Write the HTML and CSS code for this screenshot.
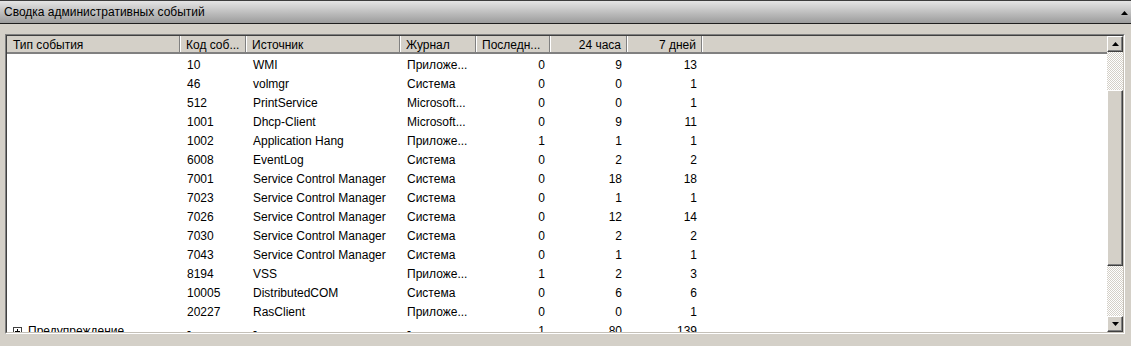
FILE: index.html
```html
<!DOCTYPE html>
<html>
<head>
  <title>Сводка административных событий</title>
  <link rel="stylesheet" href="styles.css">
</head>
<body>
  <div class="titlebar">
    <span>Сводка административных событий</span>
    <svg class="collapse" width="7" height="4" viewBox="0 0 7 4"><path d="M3.5 0L7 4H0z" fill="#000"/></svg>
  </div>

  <div class="panel">
    <div class="listview">
      <div class="listview-inner">
        <div class="table-area">
          <div class="row header">
            <div class="cell">Тип события</div>
            <div class="cell">Код соб...</div>
            <div class="cell">Источник</div>
            <div class="cell">Журнал</div>
            <div class="cell">Последн...</div>
            <div class="cell num">24 часа</div>
            <div class="cell num">7 дней</div>
            <div class="cell"></div>
          </div>

          <div class="row"><div class="cell"></div><div class="cell">10</div><div class="cell">WMI</div><div class="cell">Приложе...</div><div class="cell num">0</div><div class="cell num">9</div><div class="cell num">13</div></div>
          <div class="row"><div class="cell"></div><div class="cell">46</div><div class="cell">volmgr</div><div class="cell">Система</div><div class="cell num">0</div><div class="cell num">0</div><div class="cell num">1</div></div>
          <div class="row"><div class="cell"></div><div class="cell">512</div><div class="cell">PrintService</div><div class="cell">Microsoft...</div><div class="cell num">0</div><div class="cell num">0</div><div class="cell num">1</div></div>
          <div class="row"><div class="cell"></div><div class="cell">1001</div><div class="cell">Dhcp-Client</div><div class="cell">Microsoft...</div><div class="cell num">0</div><div class="cell num">9</div><div class="cell num">11</div></div>
          <div class="row"><div class="cell"></div><div class="cell">1002</div><div class="cell">Application Hang</div><div class="cell">Приложе...</div><div class="cell num">1</div><div class="cell num">1</div><div class="cell num">1</div></div>
          <div class="row"><div class="cell"></div><div class="cell">6008</div><div class="cell">EventLog</div><div class="cell">Система</div><div class="cell num">0</div><div class="cell num">2</div><div class="cell num">2</div></div>
          <div class="row"><div class="cell"></div><div class="cell">7001</div><div class="cell">Service Control Manager</div><div class="cell">Система</div><div class="cell num">0</div><div class="cell num">18</div><div class="cell num">18</div></div>
          <div class="row"><div class="cell"></div><div class="cell">7023</div><div class="cell">Service Control Manager</div><div class="cell">Система</div><div class="cell num">0</div><div class="cell num">1</div><div class="cell num">1</div></div>
          <div class="row"><div class="cell"></div><div class="cell">7026</div><div class="cell">Service Control Manager</div><div class="cell">Система</div><div class="cell num">0</div><div class="cell num">12</div><div class="cell num">14</div></div>
          <div class="row"><div class="cell"></div><div class="cell">7030</div><div class="cell">Service Control Manager</div><div class="cell">Система</div><div class="cell num">0</div><div class="cell num">2</div><div class="cell num">2</div></div>
          <div class="row"><div class="cell"></div><div class="cell">7043</div><div class="cell">Service Control Manager</div><div class="cell">Система</div><div class="cell num">0</div><div class="cell num">1</div><div class="cell num">1</div></div>
          <div class="row"><div class="cell"></div><div class="cell">8194</div><div class="cell">VSS</div><div class="cell">Приложе...</div><div class="cell num">1</div><div class="cell num">2</div><div class="cell num">3</div></div>
          <div class="row"><div class="cell"></div><div class="cell">10005</div><div class="cell">DistributedCOM</div><div class="cell">Система</div><div class="cell num">0</div><div class="cell num">6</div><div class="cell num">6</div></div>
          <div class="row"><div class="cell"></div><div class="cell">20227</div><div class="cell">RasClient</div><div class="cell">Приложе...</div><div class="cell num">0</div><div class="cell num">0</div><div class="cell num">1</div></div>
          <div class="row">
            <div class="cell group"><svg class="expander" width="9" height="9" viewBox="0 0 9 9"><rect x="0.5" y="0.5" width="8" height="8" fill="#fff" stroke="#404040"/><path d="M2 4.5h5M4.5 2v5" stroke="#000"/></svg>Предупреждение</div>
            <div class="cell">-</div><div class="cell">-</div><div class="cell">-</div><div class="cell num">1</div><div class="cell num">80</div><div class="cell num">139</div>
          </div>
        </div>

        <div class="vscroll">
          <div class="sb-button">
            <svg width="7" height="4" viewBox="0 0 7 4"><path d="M3.5 0L7 4H0z" fill="#000"/></svg>
          </div>
          <div class="sb-track">
            <div class="sb-thumb"></div>
          </div>
          <div class="sb-button">
            <svg width="7" height="4" viewBox="0 0 7 4"><path d="M0 0H7L3.5 4z" fill="#000"/></svg>
          </div>
        </div>
      </div>
    </div>
  </div>
</body>
</html>
```

FILE: styles.css
```css
body {
  margin: 0;
  width: 1131px;
  height: 346px;
  overflow: hidden;
  background-color: #d4d0c8;
  font-family: "Liberation Sans", Arial, sans-serif;
  font-size: 12px;
  color: #000;
}

.titlebar {
  height: 22px;
  border-top: 1px solid #3c3c3c;
  border-bottom: 1px solid #1e1e1e;
  background: linear-gradient(#e4e4e4, #9c9c9c);
  display: flex;
  align-items: center;
  justify-content: space-between;
  padding: 0 3px 0 4px;
}

.titlebar .collapse {
  margin-top: 1px;
}

.panel {
  padding: 10px 6px 0 5px;
}

.listview {
  height: 300px;
  box-sizing: border-box;
  border: 1px solid;
  border-color: #808080 #fff #fff #808080;
}

.listview-inner {
  height: 100%;
  box-sizing: border-box;
  border: 1px solid;
  border-color: #404040 #c4c0b8 #c4c0b8 #404040;
  display: flex;
}

.table-area {
  flex: 1;
  background-color: #fff;
  overflow: hidden;
}

/* rows are 19px; taller line box pushes the text down like the original */
.row {
  display: grid;
  grid-template-columns: 173px 66px 154px 76px 74px 77px 75px 1fr;
  height: 19px;
  line-height: 23px;
  overflow: hidden;
  white-space: nowrap;
}

.cell {
  padding: 0 6px 0 7px;
  overflow: hidden;
}

.num {
  text-align: right;
  padding: 0 5px 0 4px;
}

.header {
  height: 16px;
  line-height: 19px;
  background-color: #d4d0c8;
  border-bottom: 2px solid #808080;
}

.header .cell {
  border-left: 1px solid #fff;
  border-right: 1px solid #808080;
  padding: 0 5px 0 5px;
}

.header .num {
  padding: 0 5px 0 4px;
}

.header .cell:first-child {
  border-left-color: #d4d0c8;
}

.header .cell:last-child {
  border-right: none;
}

.group {
  padding-left: 6px;
}

.expander {
  vertical-align: -1px;
  margin-right: 6px;
}

.vscroll {
  width: 16px;
  display: flex;
  flex-direction: column;
}

.sb-button {
  height: 16px;
  box-sizing: border-box;
  background-color: #d4d0c8;
  border: 1px solid;
  border-color: #fff #404040 #404040 #fff;
  box-shadow: inset -1px -1px #808080;
  display: flex;
  align-items: center;
  justify-content: center;
}

.sb-track {
  flex: 1;
  padding-top: 38px;
  background-color: #fff;
  background-image: repeating-conic-gradient(#d4d0c8 0% 25%, #fff 0% 50%);
  background-size: 2px 2px;
}

.sb-thumb {
  height: 176px;
  box-sizing: border-box;
  background-color: #d4d0c8;
  border: 1px solid;
  border-color: #fff #404040 #404040 #fff;
  box-shadow: inset -1px -1px #808080;
}
```
